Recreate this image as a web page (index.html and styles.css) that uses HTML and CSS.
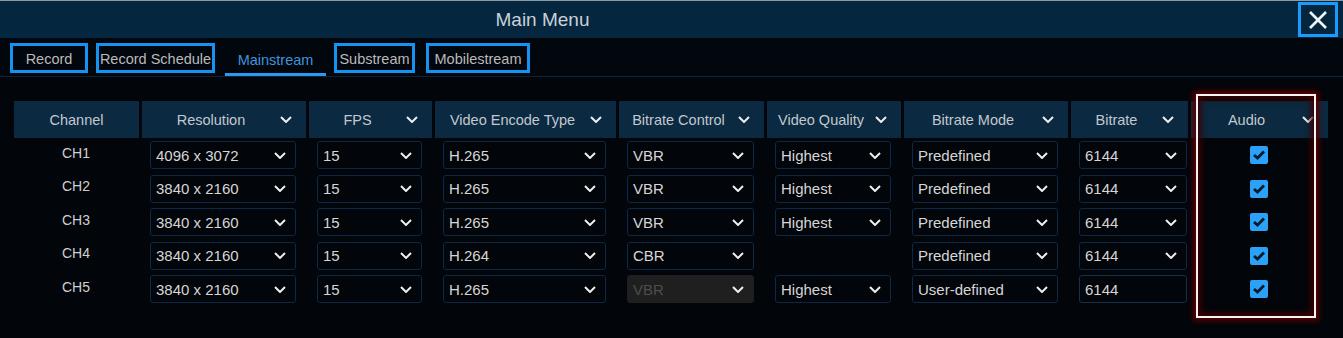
FILE: index.html
```html
<!DOCTYPE html>
<html lang="en">
  <head>
    <meta charset="UTF-8" />
    <meta name="viewport" content="width=device-width, initial-scale=1.0" />
    <title>Main Menu</title>
    <link rel="stylesheet" href="styles.css">
  </head>
  <body>
    <div class="menu">
      <div class="titlebar">
        <span class="title">Main Menu</span>
        <button class="close">
          <svg width="22" height="22" viewBox="0 0 22 22"><path d="M3 3 L19 19 M19 3 L3 19" stroke="#f2f2f2" stroke-width="2.6" fill="none" /></svg>
        </button>
      </div>

      <div class="tabs">
        <div class="tab boxed w-record">Record</div>
        <div class="tab boxed w-schedule">Record Schedule</div>
        <div class="tab active">Mainstream</div>
        <div class="tab boxed w-sub">Substream</div>
        <div class="tab boxed w-mobile">Mobilestream</div>
      </div>

      <div class="grid thead">
        <div class="th"><span class="label">Channel</span></div>
        <div class="th"><span class="label">Resolution</span><i class="chev"></i></div>
        <div class="th"><span class="label">FPS</span><i class="chev"></i></div>
        <div class="th"><span class="label">Video Encode Type</span><i class="chev"></i></div>
        <div class="th"><span class="label">Bitrate Control</span><i class="chev"></i></div>
        <div class="th"><span class="label">Video Quality</span><i class="chev"></i></div>
        <div class="th"><span class="label">Bitrate Mode</span><i class="chev"></i></div>
        <div class="th"><span class="label">Bitrate</span><i class="chev"></i></div>
        <div class="th"><span class="label">Audio</span><i class="chev"></i></div>
      </div>

      <div class="grid tbody" id="rows"></div>

      <div class="highlight"></div>
    </div>

    <script>
      const rows = [
        { ch: "CH1", res: "4096 x 3072", enc: "H.265", ctrl: "VBR", quality: "Highest", mode: "Predefined" },
        { ch: "CH2", res: "3840 x 2160", enc: "H.265", ctrl: "VBR", quality: "Highest", mode: "Predefined" },
        { ch: "CH3", res: "3840 x 2160", enc: "H.265", ctrl: "VBR", quality: "Highest", mode: "Predefined" },
        { ch: "CH4", res: "3840 x 2160", enc: "H.264", ctrl: "CBR", quality: "", mode: "Predefined" },
        { ch: "CH5", res: "3840 x 2160", enc: "H.265", ctrl: "VBR", quality: "Highest", mode: "User-defined", disabled: true, input: true },
      ];

      function select(text, cls) {
        return `<div class="select ${cls || ""}"><span>${text}</span><i class="chev"></i></div>`;
      }

      const body = document.getElementById("rows");
      rows.forEach((row) => {
        body.innerHTML += `
          <div class="td channel">${row.ch}</div>
          <div class="td">${select(row.res)}</div>
          <div class="td">${select("15")}</div>
          <div class="td">${select(row.enc)}</div>
          <div class="td">${select(row.ctrl, row.disabled ? "disabled" : "")}</div>
          <div class="td">${row.quality ? select(row.quality) : ""}</div>
          <div class="td">${select(row.mode)}</div>
          <div class="td bitrate">${row.input ? '<div class="select input"><span>6144</span></div>' : select("6144")}</div>
          <div class="td center"><span class="check"></span></div>
        `;
      });
    </script>
  </body>
</html>
```

FILE: styles.css
```css
body {
  margin: 0;
  background-color: #02050a;
  font-family: "Liberation Sans", Arial, sans-serif;
}
.menu {
  position: relative;
  width: 1343px;
  height: 338px;
  overflow: hidden;
}
.titlebar {
  height: 37px;
  border-top: 1px solid #8d9aa3;
  background-color: #04273f;
  display: flex;
  align-items: center;
  justify-content: center;
  position: relative;
}
.title {
  color: #c9d1d8;
  font-size: 19px;
  margin-left: -258px;
}
.close {
  position: absolute;
  right: 5px;
  top: 1px;
  width: 40px;
  height: 35px;
  border: 3px solid #1a9cff;
  background-color: #04273f;
  display: flex;
  align-items: center;
  justify-content: center;
  padding: 0;
}
.tabs {
  height: 38px;
  border-bottom: 1px solid #0b2339;
  display: flex;
  padding-left: 10px;
  gap: 8px;
  background-color: #02060d;
}
.tab {
  color: #b9b9b9;
  font-size: 14.5px;
  display: flex;
  align-items: center;
  justify-content: center;
  box-sizing: border-box;
}
.boxed {
  margin-top: 5px;
  height: 30px;
  padding-top: 2px;
  border: 3px solid #1593f2;
}
.w-record { width: 78px; }
.w-schedule { width: 119px; }
.w-sub { width: 81px; }
.w-mobile { width: 104px; margin-left: 3px; }
.active {
  width: 101px;
  margin-left: 2px;
  color: #3f94dc;
  padding-top: 8px;
  border-bottom: 3px solid #2e97f0;
}
.grid {
  display: grid;
  grid-template-columns: 124px 164px 123px 181px 145px 134px 164px 117px 137px;
  column-gap: 3px;
  margin-left: 14px;
}
.thead {
  margin-top: 24px;
  margin-left: 15px;
}
.thead .th:first-child {
  margin-left: -1px;
}
.th {
  height: 37px;
  background-color: #0b2940;
  display: flex;
  align-items: center;
  color: #c2c8ce;
  font-size: 14.5px;
}
.th .label {
  flex: 1;
  text-align: center;
  white-space: nowrap;
}
.th .chev {
  margin-right: 14px;
}
.chev {
  width: 12px;
  height: 7px;
  flex-shrink: 0;
  background: url("data:image/svg+xml;utf8,<svg xmlns='http://www.w3.org/2000/svg' width='12' height='7' viewBox='0 0 12 7'><path d='M1 1 L6 6 L11 1' stroke='%23eeeeee' stroke-width='2' fill='none'/></svg>") no-repeat center;
}
.tbody {
  margin-top: 3px;
  row-gap: 5.5px;
}
.td {
  height: 28px;
  display: flex;
  align-items: center;
  padding: 0 9px;
}
.channel {
  justify-content: center;
  color: #cfcfcf;
  font-size: 14px;
  padding-bottom: 5px;
  box-sizing: border-box;
}
.center {
  justify-content: center;
}
.bitrate {
  padding: 0 0 0 9px;
}
.select {
  width: 100%;
  height: 28px;
  box-sizing: border-box;
  border: 1px solid #0d2747;
  border-radius: 3px;
  background-color: #02050a;
  display: flex;
  align-items: center;
  padding: 0 9px 0 5px;
  color: #d6d6d6;
  font-size: 15px;
}
.select span {
  flex: 1;
}
.disabled {
  background-color: #1f1f1f;
  border-color: #1f1f1f;
  color: #4d4d4d;
}
.input {
  border-color: #14304f;
}
.check {
  width: 18px;
  height: 18px;
  border-radius: 2px;
  background: #2ba2f7 url("data:image/svg+xml;utf8,<svg xmlns='http://www.w3.org/2000/svg' width='18' height='18' viewBox='0 0 18 18'><path d='M4 9 L7.5 12 L14 5.5' stroke='%23081a2c' stroke-width='2.8' fill='none'/></svg>") no-repeat center;
}
.highlight {
  position: absolute;
  left: 1196px;
  top: 94px;
  width: 116px;
  height: 220px;
  border: 2px solid #f4f4f4;
  box-shadow: 0 0 5px 3px #5a0000, inset 0 0 6px 3px #3e0000;
}
```
